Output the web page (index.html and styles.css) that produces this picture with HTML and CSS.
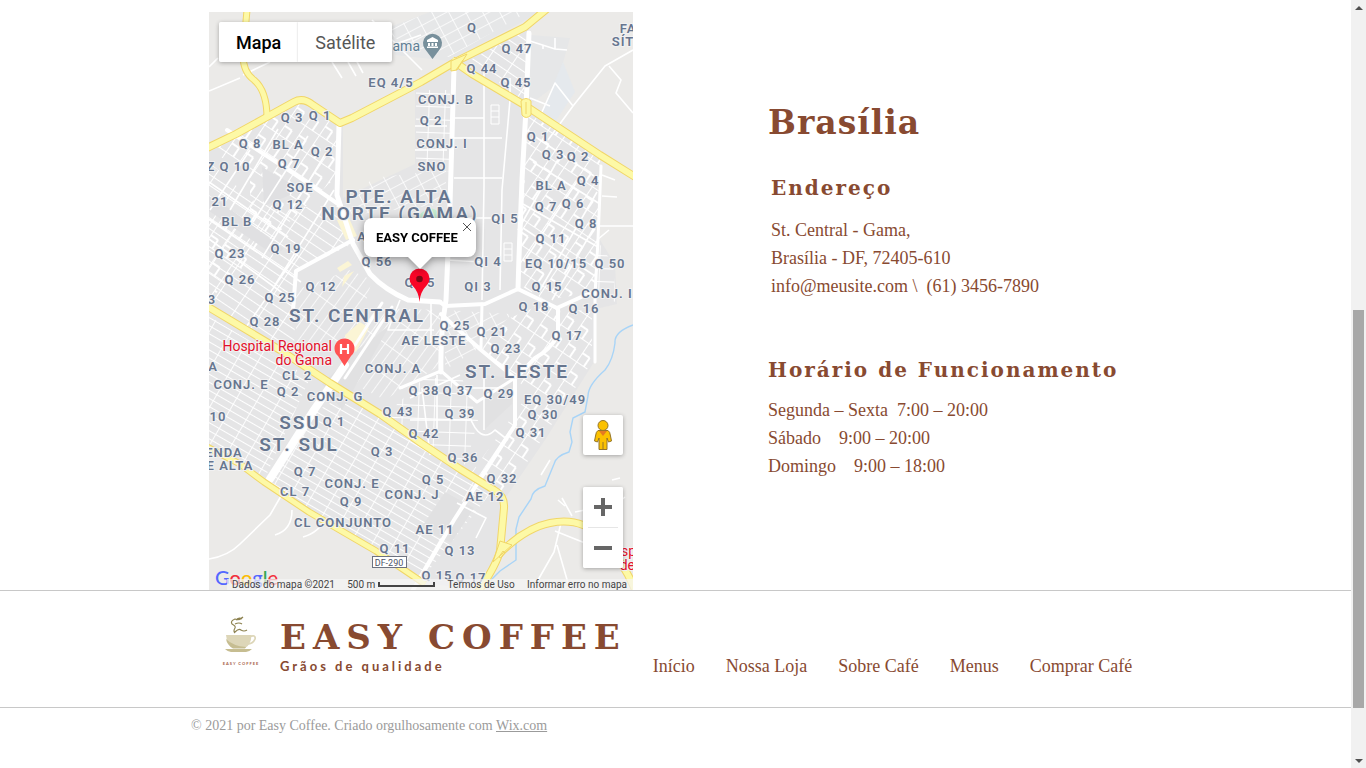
FILE: index.html
```html
<!DOCTYPE html>
<html lang="pt">
<head>
<meta charset="utf-8">
<meta name="viewport" content="width=device-width, initial-scale=1">
<title>Easy Coffee</title>
<link rel="stylesheet" href="styles.css">
</head>
<body>
<div class="window">
<div class="page">
<main class="wrap store">
<section class="map" aria-label="Mapa">
<svg class="map-art" viewBox="209 12 424 578" preserveAspectRatio="xMidYMid slice">
<defs>
<pattern id="fine" width="23" height="9" patternUnits="userSpaceOnUse" patternTransform="rotate(34)"><path d="M0 0H23M0 0V9" stroke="#fff" stroke-width="2" fill="none"/></pattern>
<pattern id="steep" width="19" height="7" patternUnits="userSpaceOnUse" patternTransform="translate(3 4) rotate(30)"><path d="M0 0H19M0 0V7" stroke="#fff" stroke-width="1.8" fill="none"/></pattern>
<pattern id="block" width="22" height="17" patternUnits="userSpaceOnUse" patternTransform="rotate(-56)"><path d="M0 0H22M0 0V17M11 0V9M0 9H11" stroke="#fff" stroke-width="2" fill="none"/></pattern>
<pattern id="small" width="15" height="10" patternUnits="userSpaceOnUse" patternTransform="rotate(-28)"><path d="M0 0H15M0 0V10" stroke="#fff" stroke-width="1.6" fill="none"/></pattern>
<pattern id="central" width="26" height="9" patternUnits="userSpaceOnUse" patternTransform="rotate(-54)"><path d="M0 0H26M0 0V9" stroke="#fff" stroke-width="1.7" fill="none"/></pattern>
<pattern id="square" width="16" height="13" patternUnits="userSpaceOnUse" patternTransform="rotate(2)"><path d="M0 0H16M0 0V13" stroke="#fff" stroke-width="1.8" fill="none"/></pattern>
</defs>
<rect x="209" y="12" width="424" height="578" fill="#ebeae8"/>
<path fill="#e5e5e6" d="M209 150L300 102L340 125L421 82L455 65L529 25V107L600 155V240L615 264L617 304L596 309L594 362L545 440L504 500L495 560L470 590L421 582L209 448Z"/>
<path fill="#e6e7e8" d="M382 30L430 12H540L450 61L395 55ZM530 35L570 38L557 84L527 107Z"/>
<path fill="#e5e9ed" d="M563 62L575 92L555 122L542 112Z"/>
<path fill="#ebeae6" d="M343 124L415 87V164L343 198Z"/>
<!-- districts -->
<path fill="url(#block)" d="M209 152L300 103L337 124V176L209 300V220L250 215V170Z"/>
<path fill="url(#fine)" d="M209 162L262 208L338 206L352 244L296 272L294 354L209 303Z"/>
<path fill="url(#steep)" d="M209 316L310 378L265 478L209 443Z"/>
<path fill="url(#steep)" d="M318 410L350 392L490 494L421 580L268 484Z"/>
<path fill="url(#square)" d="M383 418L424 378H462L478 420L466 465L430 450Z"/>
<path fill="url(#block)" d="M526 112L600 158L597 292L545 300L518 284Z"/>
<path fill="url(#block)" d="M540 305L592 312V362L535 450L504 498L472 472L530 392L480 347L510 318Z"/>
<path fill="url(#small)" d="M385 30L430 12H528L449 57L405 45Z"/>
<path fill="url(#small)" d="M372 178L446 170V204L342 216Z"/>
<path fill="url(#central)" d="M350 270L372 280L355 340L296 350V290Z"/>
<path fill="url(#central)" d="M370 308L440 310V365L385 400L345 380Z"/>
<path fill="url(#fine)" d="M470 60L526 30V104Z"/>
<path fill="url(#square)" d="M416 90H450V172L416 168ZM597 240L613 264L616 302L597 297Z"/>
<path fill="url(#small)" d="M445 310L512 314L476 350L445 370Z"/>
<path fill="#e0e0e2" d="M262 167L288 182L290 195L264 206ZM209 196L222 203L284 249L274 255L209 211Z"/>
<path fill="#e1e1e2" d="M357 350L390 325L342 410L322 384ZM483 375L514 378L512 404L484 430ZM445 492L474 508L451 543L421 528Z"/>
<path fill="#fbf5d5" d="M337 220L349 218L357 236L346 240ZM337 268L348 261L352 265L340 272ZM344 276L354 271L342 287ZM345 335L360 322L369 328L356 352L347 345Z"/>
<!-- minor streets -->
<g fill="none" stroke="#fff" stroke-width="1.6" stroke-linejoin="round">
<path d="M209 91L240 78M209 67L218 58M243 75L270 62M332 62L342 78M348 62L356 76M355 58L363 73M365 55L421 35M372 20L422 70M530 41L555 49L567 50M555 38V49M543 45V49M633 50L605 66L573 106L548 140M609 66L621 80L616 93L633 113M600 154L610 159M542 112L555 83L573 106M530 98L550 106M602 175L615 180M602 196L617 197M600 226H633M609 230L597 240"/>
<path d="M484 66V186L482 300M510 78V100H522M510 100L502 190L500 290M454 118H484M454 138H502M454 178H502M454 218H500M446 260L482 262M415 126H447M415 150H447M365 250L440 251M431 303V345M400 300L388 330L434 330"/>
<path stroke-width="1" d="M491 105H499V124H491ZM491 111H499M491 117H499M504 243V261M512 243V261M504 243H512M504 249H512M504 255H512M504 261H512"/>
<path d="M209 559Q228 556 240 544L270 515L281 496M275 535Q292 530 292 510M303 537Q320 532 325 518M561 523L554 552L538 580M557 545L570 590M555 531L590 545M562 498L572 516M565 506L558 500M575 512L585 510M457 503L486 518L476 538M550 460L541 475M612 480L620 478M614 506L625 497"/>
<path d="M410 398L460 375M410 420H470M422 388L430 455M437 375L437 430M460 388H500M484 375V430M469 415Q480 445 495 430L508 440M468 340L455 326"/>
<path d="M209 219L301 282M209 239L292 300M209 182L288 237M250 150L210 210M278 129L230 210M308 136L253 222M326 153L262 258M334 190L275 285M300 250L244 330"/>
<path d="M523 204L598 247M523 228L595 276M533 162L600 204M534 136L600 180M560 156L518 230M580 177L525 260M597 192L540 290M599 219L552 300"/>
</g>
<!-- main streets -->
<g fill="none" stroke="#fff" stroke-width="5" stroke-linecap="round" stroke-linejoin="round">
<path stroke-width="4" d="M227 130L293 173L341 206"/>
<path d="M339 125L337 195L353 244L370 274Q385 290 408 300L440 302"/>
<path d="M454 68L450 204L446 300Q440 336 441 372"/>
<path d="M529 33L526 109L522 180L519 257L518 289"/>
<path stroke-width="4" d="M440 302L445 306L485 304L518 289L557 308L590 293"/>
<path stroke-width="4" d="M353 240L296 271L293 310"/>
<path stroke-width="8" d="M270 479L314 410L345 365"/>
<path stroke-width="3" d="M337 373L382 303M345 378L392 307"/>
<path stroke-width="4" d="M413 590L454 520L515 425V378L481 350L441 314M558 308V335Q550 350 535 358L517 377"/>
<path stroke-width="3" d="M515 378L477 402L441 371L400 388M601 166L598 240L595 295V362M482 304L481 348"/>
</g>
<!-- stream -->
<path fill="none" stroke="#a8d4f7" stroke-width="1.4" d="M633 325Q614 332 615 343Q613 360 605 370Q588 385 588 396L585 412L573 418L570 432L572 442L569 452Q556 456 554 464L545 486Q532 490 531 499L519 517L516 529V560L500 571L491 580"/>
<!-- highways: casing, then fill -->
<g fill="none" stroke-linejoin="round">
<g stroke="#f1d668">
<path stroke-width="8" d="M205 149L236 134L265 118L294 102Q303 97 313 105L340 123L352 118L421 82L455 62L525 27L548 8"/>
<path stroke-width="7" d="M247 10L243 55Q243 72 254 80Q267 91 267 118"/>
<path stroke-width="8" d="M452 60L472 74L526 106L600 155L640 180"/>
<path stroke-width="8" d="M205 305L280 350L330 383L380 414L421 443L460 469L494 490Q505 496 504 508L500 551Q496 566 478 592"/>
<path stroke-width="7" d="M205 446L240 464L264 482L309 512L376 551L425 584"/>
<path stroke-width="8" d="M499 554Q525 528 550 523Q580 517 600 536Q624 562 636 592"/>
</g>
<g stroke="#fdf9a6">
<path stroke-width="6" d="M205 149L236 134L265 118L294 102Q303 97 313 105L340 123L352 118L421 82L455 62L525 27L548 8"/>
<path stroke-width="5" d="M247 10L243 55Q243 72 254 80Q267 91 267 118"/>
<path stroke-width="6" d="M452 60L472 74L526 106L600 155L640 180"/>
<path stroke-width="6" d="M205 305L280 350L330 383L380 414L421 443L460 469L494 490Q505 496 504 508L500 551Q496 566 478 592"/>
<path stroke-width="5" d="M205 446L240 464L264 482L309 512L376 551L425 584"/>
<path stroke-width="6" d="M499 554Q525 528 550 523Q580 517 600 536Q624 562 636 592"/>
</g>
</g>
<path fill="#fdf9a6" stroke="#f1d668" d="M451 71V61L467 54L462 62L457 70ZM521 101Q526 96 531 101V115Q526 120 522 115ZM493 562L500 541L512 545Z"/>
<path stroke="#f1d668" fill="none" d="M526 102V114M456 70L463 60M499 557L503 551L505 553L501 558Z"/>
<path fill="#c4ecd0" d="M417 217Q430 203 438 212V219Z"/>
<!-- labels -->
<g class="label">
<text x="472" y="32">Q</text><text x="517" y="53">Q 47</text><text x="482" y="73">Q 44</text><text x="516" y="87">Q 45</text><text x="391" y="87">EQ 4/5</text>
<text x="446" y="104">CONJ. B</text><text x="431" y="125">Q 2</text><text x="442" y="148">CONJ. I</text><text x="432" y="171">SNO</text><text x="628" y="33">FA</text><text x="623" y="46">SÍT</text>
<text x="292" y="122">Q 3</text><text x="320" y="120">Q 1</text><text x="250" y="148">Q 8</text><text x="288" y="149">BL A</text><text x="322" y="156">Q 2</text><text x="211" y="171">Z</text><text x="235" y="171">Q 10</text><text x="289" y="168">Q 7</text><text x="300" y="192">SOE</text><text x="288" y="209">Q 12</text><text x="220" y="206">21</text><text x="237" y="226">BL B</text><text x="286" y="253">Q 19</text><text x="230" y="258">Q 23</text><text x="240" y="284">Q 26</text><text x="321" y="291">Q 12</text><text x="280" y="302">Q 25</text><text x="212" y="304">3</text><text x="265" y="326">Q 28</text><text x="362" y="241">A</text><text x="377" y="266">Q 56</text><text x="420" y="287">Q 55</text>
<text x="538" y="141">Q 1</text><text x="553" y="159">Q 3</text><text x="578" y="161">Q 2</text><text x="551" y="190">BL A</text><text x="588" y="185">Q 4</text><text x="546" y="211">Q 7</text><text x="573" y="208">Q 6</text><text x="586" y="228">Q 8</text><text x="505" y="223">QI 5</text><text x="551" y="243">Q 11</text><text x="488" y="266">QI 4</text><text x="556" y="268">EQ 10/15</text><text x="610" y="268">Q 50</text><text x="478" y="291">QI 3</text><text x="547" y="291">Q 15</text><text x="607" y="298">CONJ. I</text><text x="534" y="311">Q 18</text><text x="584" y="313">Q 16</text><text x="455" y="330">Q 25</text><text x="492" y="336">Q 21</text><text x="567" y="340">Q 17</text><text x="434" y="345">AE LESTE</text><text x="506" y="353">Q 23</text><text x="393" y="373">CONJ. A</text>
<text x="424" y="395">Q 38</text><text x="458" y="395">Q 37</text><text x="499" y="398">Q 29</text><text x="555" y="404">EQ 30/49</text><text x="398" y="416">Q 43</text><text x="460" y="418">Q 39</text><text x="543" y="419">Q 30</text><text x="424" y="438">Q 42</text><text x="531" y="437">Q 31</text><text x="297" y="380">CL 2</text><text x="241" y="389">CONJ. E</text><text x="288" y="396">Q 2</text><text x="335" y="401">CONJ. G</text><text x="213" y="371">A</text><text x="218" y="421">10</text><text x="334" y="426">Q 1</text><text x="382" y="456">Q 3</text><text x="463" y="462">Q 36</text>
<text x="224" y="457">ENDA</text><text x="230" y="470">E ALTA</text><text x="305" y="476">Q 7</text><text x="295" y="496">CL 7</text><text x="352" y="488">CONJ. E</text><text x="433" y="484">Q 5</text><text x="502" y="483">Q 32</text><text x="351" y="506">Q 9</text><text x="412" y="499">CONJ. J</text><text x="485" y="501">AE 12</text><text x="343" y="527">CL CONJUNTO</text><text x="435" y="534">AE 11</text><text x="395" y="553">Q 11</text><text x="460" y="555">Q 13</text><text x="437" y="580">Q 15</text><text x="471" y="582">Q 17</text>
</g>
<g class="label district">
<text x="399" y="203">PTE. ALTA</text><text x="400" y="220">NORTE (GAMA)</text><text x="357" y="322">ST. CENTRAL</text><text x="517" y="378">ST. LESTE</text><text x="300" y="429">SSU</text><text x="299" y="451">ST. SUL</text>
</g>
<g class="label place"><text x="332" y="351">Hospital Regional</text><text x="332" y="365">do Gama</text><text x="636" y="556">Hosp</text><text x="635" y="570">de</text></g>
<g class="label museum"><text x="420" y="51">Gama</text></g>
<rect x="372.5" y="556.5" width="34" height="11" fill="#fff" stroke="#6d7280"/><text class="shield" x="389" y="566">DF-290</text>
<path fill="#ff5252" d="M344.500 366L338 356A10 10 0 1 1 351 356Z"/><path d="M341 344V354M348 344V354M341 349H348" stroke="#fff" stroke-width="2.2"/>
<path fill="#78909c" d="M432.500 59L425 49A9.500 9.500 0 1 1 440 49Z"/><path fill="#fff" d="M427 40L432.500 37L438 40V42H427ZM428 43H430V46H428ZM431.500 43H433.500V46H431.500ZM435 43H437V46H435ZM427 46.500H438V48H427Z"/>
<path fill="#f90627" d="M419.500 302Q419 292 412 285A10 10 0 1 1 427 285Q420 292 419.500 302Z"/><circle cx="419.500" cy="279" r="3.300" fill="#7a0b14"/>
</svg>
<span class="google" aria-label="Google"><span class="g-blue">G</span><span class="g-red">o</span><span class="g-yellow">o</span><span class="g-blue">g</span><span class="g-green">l</span><span class="g-red">e</span></span>
<div class="map-type"><button class="type-btn is-on" type="button">Mapa</button><button class="type-btn" type="button">Satélite</button></div>
<div class="info"><strong>EASY COFFEE</strong><button class="info-close" type="button" aria-label="Fechar"><svg viewBox="0 0 8 8" width="8" height="8"><path d="M0 0L8 8M8 0L0 8" stroke="#555" fill="none"/></svg></button></div>
<div class="map-tools">
<button class="tool" type="button" aria-label="Street View"><svg viewBox="0 0 20 32" width="20" height="32"><g fill="#fbc100" stroke="#94752a" stroke-width="1"><path d="M5 11.500H15Q17 12.500 17.500 17L18.500 22L15.500 23L14 19V30.500H6V19L4.500 23L1.500 22L2.500 17Q3 12.500 5 11.500Z"/><circle cx="10" cy="6.500" r="5"/></g><path d="M6 12H14L10 17Z" fill="#e57a22"/><path d="M10 23V30" stroke="#94752a"/></svg></button>
<div class="zoom"><button class="tool" type="button" aria-label="Aumentar"><svg viewBox="0 0 18 18" width="18" height="18"><path d="M0 9H18M9 0V18" stroke="#666" stroke-width="4"/></svg></button><button class="tool" type="button" aria-label="Diminuir"><svg viewBox="0 0 18 18" width="18" height="18"><path d="M0 9H18" stroke="#666" stroke-width="4"/></svg></button></div>
</div>
<div class="credits"><span>Dados do mapa ©2021</span><span class="scale">500 m <i class="scale-bar"></i></span><a href="#termos">Termos de Uso</a><a href="#erro">Informar erro no mapa</a></div>
</section>
<section class="details">
<h1 class="city">Brasília</h1>
<div class="address"><h2 class="sub">Endereço</h2><p class="lines">St. Central - Gama,<br>Brasília - DF, 72405-610<br><a href="mailto:info@meusite.com">info@meusite.com</a> \&nbsp; (61) 3456-7890</p></div>
<div class="hours"><h2 class="sub">Horário de Funcionamento</h2><p class="lines">Segunda – Sexta &nbsp;7:00 – 20:00<br>Sábado &nbsp;&nbsp; 9:00 – 20:00<br>Domingo &nbsp;&nbsp; 9:00 – 18:00</p></div>
</section>
</main>
<footer>
<div class="band"><div class="wrap brand-row">
<svg class="logo" viewBox="0 0 40 52" width="40" height="52" aria-hidden="true">
<path fill="#ddd6b8" d="M5 20H30.500Q30 30 24 33H12Q6 30 5 20Z"/><path fill="#c6bd91" d="M5 24Q12 31 25 32L24 33.500H12Q6 30 5 24Z"/>
<path fill="none" stroke="#ddd6b8" stroke-width="1.800" d="M28 22Q35 19 34 24Q32 29 26 29"/><path fill="#c6bd91" d="M4 34H31Q28 37 25 37H10Q7 37 4 34Z"/>
<path fill="none" stroke="#8d8250" stroke-width="1.200" d="M22 2Q18 6 14 4Q9 6 11 9Q15 11 14 13Q12 16 14 18M15 5Q18 2 21 4M14 9Q18 7 21 9M14 17Q18 13 20 15Q23 17 26 15"/>
<text class="logo-text" x="20" y="50">EASY COFFEE</text></svg>
<div class="brand"><strong class="brand-name">EASY COFFEE</strong><span class="tagline">Grãos de qualidade</span></div>
<nav class="nav"><a href="#inicio">Início</a><a href="#loja">Nossa Loja</a><a href="#sobre">Sobre Café</a><a href="#menus">Menus</a><a href="#comprar">Comprar Café</a></nav>
</div></div>
<p class="wrap copy">© 2021 por Easy Coffee. Criado orgulhosamente com <a href="#wix">Wix.com</a></p>
</footer>
</div>
<div class="scrollbar" aria-hidden="true"><span class="arrow up"></span><span class="thumb"></span><span class="arrow down"></span></div>
</div>
</body>
</html>
```

FILE: styles.css
```css
* { box-sizing: border-box; }
body { margin: 0; background: #fff; color: #884a31; font: 18px/28px "Liberation Serif", serif; }
a { color: inherit; text-decoration: none; }
h1, h2, p { margin: 0; }
button { border: 0; padding: 0; background: #fff; font: inherit; cursor: pointer; }
.window { display: grid; grid-template-columns: 1fr 15px; min-height: 100vh; }
.wrap { width: 100%; max-width: 981px; margin: 0 auto; }
.store { display: grid; grid-template-columns: 424px 1fr; gap: 135px; padding: 12px 0 0 24px; }

.map { position: relative; height: 578px; overflow: hidden; font-family: Roboto, sans-serif; }
.map-art { display: block; width: 100%; height: 100%; }
.label { font: 600 13px Roboto, sans-serif; letter-spacing: 1px; text-anchor: middle; fill: #67768f; stroke: #f1f1f2; stroke-width: 2px; paint-order: stroke; }
.district { font-size: 19px; letter-spacing: 2px; }
.place { font-size: 14px; font-weight: 400; letter-spacing: 0; text-anchor: end; fill: #e3102a; }
.museum { font-size: 14px; font-weight: 400; letter-spacing: 0; text-anchor: end; fill: #5f7f95; }
.shield { font: 9px Roboto, sans-serif; text-anchor: middle; fill: #4d5566; }

.map-type { position: absolute; left: 10px; top: 10px; display: flex; box-shadow: 0 1px 4px rgba(0,0,0,.3); border-radius: 2px; overflow: hidden; }
.type-btn { height: 40px; padding: 2px 17px 0; color: #565656; font-size: 18px; }
.type-btn + .type-btn { box-shadow: 0 0 2px rgba(0,0,0,.2); }
.type-btn.is-on { color: #000; font-weight: 500; }
.info { position: absolute; left: 155px; top: 206px; padding: 10px 18px 9px 12px; border-radius: 8px; background: #fff; color: #000; font-size: 13px; line-height: 20px; filter: drop-shadow(0 2px 4px rgba(0,0,0,.4)); }
.info strong { font-weight: 700; white-space: nowrap; }
.info::after { content: ""; position: absolute; left: 44px; top: 100%; border: 12px solid transparent; border-top-color: #fff; border-bottom: 0; }
.info-close { position: absolute; right: 5px; top: 5px; display: flex; }
.map-tools { position: absolute; right: 10px; bottom: 22px; display: grid; gap: 32px; }
.tool { display: flex; align-items: center; justify-content: center; width: 40px; height: 40px; border-radius: 2px; }
.map-tools > .tool, .zoom { box-shadow: 0 1px 4px rgba(0,0,0,.3); border-radius: 2px; background: #fff; }
.zoom .tool + .tool::before { content: ""; position: absolute; width: 30px; height: 1px; margin-bottom: 41px; background: #e6e6e6; }
.zoom .tool + .tool { margin-top: 1px; }
.google { position: absolute; left: 6px; bottom: 0; font: 500 20px/25px Lato, sans-serif; }
.g-blue { color: #5468ff; } .g-red { color: #f2303c; } .g-yellow { color: #fbbc05; } .g-green { color: #34a853; }
.credits { position: absolute; left: 18px; right: 0; bottom: 0; display: flex; justify-content: space-between; padding: 0 6px 0 5px; background: rgba(245,245,245,.7); color: #444; font-size: 10px; line-height: 11px; white-space: nowrap; }
.scale { display: flex; align-items: center; gap: 3px; }
.scale-bar { width: 57px; height: 5px; border: 2px solid #444; border-top: 0; }

.details { padding-top: 87px; }
.city, .sub, .brand-name { font-family: "DejaVu Serif", serif; font-weight: 700; }
.city { font-size: 33px; line-height: 48px; letter-spacing: 1px; }
.sub { font-size: 20px; line-height: 28px; letter-spacing: 2px; white-space: nowrap; }
.address { padding: 27px 0 0 3px; }
.address .lines { padding-top: 14px; }
.hours { padding-top: 56px; }
.hours .lines { padding-top: 12px; }

.band { border: solid #c8c8c8; border-width: 1px 0; }
.brand-row { display: flex; align-items: flex-start; height: 116px; padding: 24px 0 0 36px; }
.logo { flex: none; }
.logo-text { font: 700 4px Lato, sans-serif; letter-spacing: 1px; text-anchor: middle; fill: #a65b43; }
.brand { display: grid; margin-left: 19px; flex: none; }
.brand-name { font-size: 34px; line-height: 44px; letter-spacing: 7px; }
.tagline { font: 700 13px/14px Lato, sans-serif; letter-spacing: 3px; }
.nav { display: flex; gap: 31px; margin: 37px 0 0 26px; white-space: nowrap; }
.copy { padding: 4px 0 0 6px; color: #9b9b9b; font-size: 14px; }
.copy a { text-decoration: underline; }

.scrollbar { display: grid; grid-template-rows: 310px 398px 1fr; justify-items: center; background: #f1f1f1; }
.thumb { width: 11px; background: #a8a8a8; }
.arrow { border: 4px solid transparent; }
.up { align-self: start; margin-top: 6px; border-top: 0; border-bottom-color: #505050; }
.down { align-self: end; margin-bottom: 5px; border-bottom: 0; border-top-color: #505050; }
```
